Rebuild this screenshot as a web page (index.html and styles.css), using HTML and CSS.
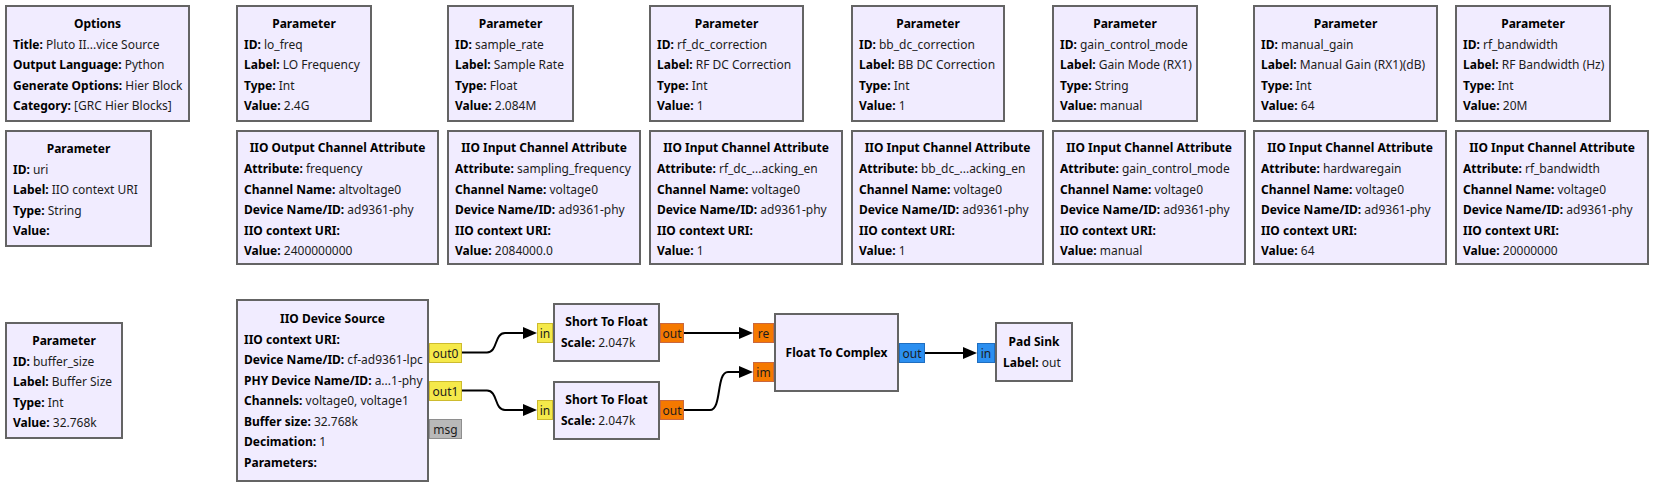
FILE: index.html
```html
<!DOCTYPE html>
<html lang="en">
<head>
    <meta charset="UTF-8">
    <meta name="viewport" content="width=device-width, initial-scale=1.0">
    <title>Pluto IIO Device Source - flowgraph</title>
    <link rel="stylesheet" href="styles.css">
</head>
<body>
    <div class="canvas">
        <!-- wires go first so ports and blocks sit on top -->
        <svg class="wires" width="1655" height="489" viewBox="0 0 1655 489">
            <path class="wire" d="M462 352.5 H487 C498 352.5, 494 333, 505 333 H524"/>
            <path class="arrow" d="M523 327 L537 333 L523 339 Z"/>
            <path class="wire" d="M462 390.5 H487 C498 390.5, 494 410, 505 410 H524"/>
            <path class="arrow" d="M523 404 L537 410 L523 416 Z"/>
            <path class="wire" d="M684 333 H740"/>
            <path class="arrow" d="M739 327 L753 333 L739 339 Z"/>
            <path class="wire" d="M684 410 H710 C722 410, 716 372, 728 372 H740"/>
            <path class="arrow" d="M739 366 L753 372 L739 378 Z"/>
            <path class="wire" d="M925 353 H964"/>
            <path class="arrow" d="M963 347 L977 353 L963 359 Z"/>
        </svg>

        <div class="block" id="options">
            <div class="title">Options</div>
            <div class="row"><b>Title:</b> Pluto II...vice Source</div>
            <div class="row"><b>Output Language:</b> Python</div>
            <div class="row"><b>Generate Options:</b> Hier Block</div>
            <div class="row"><b>Category:</b> [GRC Hier Blocks]</div>
        </div>

        <div class="block" id="p-lo-freq">
            <div class="title">Parameter</div>
            <div class="row"><b>ID:</b> lo_freq</div>
            <div class="row"><b>Label:</b> LO Frequency</div>
            <div class="row"><b>Type:</b> Int</div>
            <div class="row"><b>Value:</b> 2.4G</div>
        </div>

        <div class="block" id="p-sample-rate">
            <div class="title">Parameter</div>
            <div class="row"><b>ID:</b> sample_rate</div>
            <div class="row"><b>Label:</b> Sample Rate</div>
            <div class="row"><b>Type:</b> Float</div>
            <div class="row"><b>Value:</b> 2.084M</div>
        </div>

        <div class="block" id="p-rf-dc">
            <div class="title">Parameter</div>
            <div class="row"><b>ID:</b> rf_dc_correction</div>
            <div class="row"><b>Label:</b> RF DC Correction</div>
            <div class="row"><b>Type:</b> Int</div>
            <div class="row"><b>Value:</b> 1</div>
        </div>

        <div class="block" id="p-bb-dc">
            <div class="title">Parameter</div>
            <div class="row"><b>ID:</b> bb_dc_correction</div>
            <div class="row"><b>Label:</b> BB DC Correction</div>
            <div class="row"><b>Type:</b> Int</div>
            <div class="row"><b>Value:</b> 1</div>
        </div>

        <div class="block" id="p-gain-mode">
            <div class="title">Parameter</div>
            <div class="row"><b>ID:</b> gain_control_mode</div>
            <div class="row"><b>Label:</b> Gain Mode (RX1)</div>
            <div class="row"><b>Type:</b> String</div>
            <div class="row"><b>Value:</b> manual</div>
        </div>

        <div class="block" id="p-manual-gain">
            <div class="title">Parameter</div>
            <div class="row"><b>ID:</b> manual_gain</div>
            <div class="row"><b>Label:</b> Manual Gain (RX1)(dB)</div>
            <div class="row"><b>Type:</b> Int</div>
            <div class="row"><b>Value:</b> 64</div>
        </div>

        <div class="block" id="p-rf-bw">
            <div class="title">Parameter</div>
            <div class="row"><b>ID:</b> rf_bandwidth</div>
            <div class="row"><b>Label:</b> RF Bandwidth (Hz)</div>
            <div class="row"><b>Type:</b> Int</div>
            <div class="row"><b>Value:</b> 20M</div>
        </div>

        <div class="block" id="p-uri">
            <div class="title">Parameter</div>
            <div class="row"><b>ID:</b> uri</div>
            <div class="row"><b>Label:</b> IIO context URI</div>
            <div class="row"><b>Type:</b> String</div>
            <div class="row"><b>Value:</b></div>
        </div>

        <div class="block attr" id="a-lo-freq">
            <div class="title">IIO Output Channel Attribute</div>
            <div class="row"><b>Attribute:</b> frequency</div>
            <div class="row"><b>Channel Name:</b> altvoltage0</div>
            <div class="row"><b>Device Name/ID:</b> ad9361-phy</div>
            <div class="row"><b>IIO context URI:</b></div>
            <div class="row"><b>Value:</b> 2400000000</div>
        </div>

        <div class="block attr" id="a-sample-rate">
            <div class="title">IIO Input Channel Attribute</div>
            <div class="row"><b>Attribute:</b> sampling_frequency</div>
            <div class="row"><b>Channel Name:</b> voltage0</div>
            <div class="row"><b>Device Name/ID:</b> ad9361-phy</div>
            <div class="row"><b>IIO context URI:</b></div>
            <div class="row"><b>Value:</b> 2084000.0</div>
        </div>

        <div class="block attr" id="a-rf-dc">
            <div class="title">IIO Input Channel Attribute</div>
            <div class="row"><b>Attribute:</b> rf_dc_...acking_en</div>
            <div class="row"><b>Channel Name:</b> voltage0</div>
            <div class="row"><b>Device Name/ID:</b> ad9361-phy</div>
            <div class="row"><b>IIO context URI:</b></div>
            <div class="row"><b>Value:</b> 1</div>
        </div>

        <div class="block attr" id="a-bb-dc">
            <div class="title">IIO Input Channel Attribute</div>
            <div class="row"><b>Attribute:</b> bb_dc_...acking_en</div>
            <div class="row"><b>Channel Name:</b> voltage0</div>
            <div class="row"><b>Device Name/ID:</b> ad9361-phy</div>
            <div class="row"><b>IIO context URI:</b></div>
            <div class="row"><b>Value:</b> 1</div>
        </div>

        <div class="block attr" id="a-gain-mode">
            <div class="title">IIO Input Channel Attribute</div>
            <div class="row"><b>Attribute:</b> gain_control_mode</div>
            <div class="row"><b>Channel Name:</b> voltage0</div>
            <div class="row"><b>Device Name/ID:</b> ad9361-phy</div>
            <div class="row"><b>IIO context URI:</b></div>
            <div class="row"><b>Value:</b> manual</div>
        </div>

        <div class="block attr" id="a-manual-gain">
            <div class="title">IIO Input Channel Attribute</div>
            <div class="row"><b>Attribute:</b> hardwaregain</div>
            <div class="row"><b>Channel Name:</b> voltage0</div>
            <div class="row"><b>Device Name/ID:</b> ad9361-phy</div>
            <div class="row"><b>IIO context URI:</b></div>
            <div class="row"><b>Value:</b> 64</div>
        </div>

        <div class="block attr" id="a-rf-bw">
            <div class="title">IIO Input Channel Attribute</div>
            <div class="row"><b>Attribute:</b> rf_bandwidth</div>
            <div class="row"><b>Channel Name:</b> voltage0</div>
            <div class="row"><b>Device Name/ID:</b> ad9361-phy</div>
            <div class="row"><b>IIO context URI:</b></div>
            <div class="row"><b>Value:</b> 20000000</div>
        </div>

        <div class="block" id="p-buffer">
            <div class="title">Parameter</div>
            <div class="row"><b>ID:</b> buffer_size</div>
            <div class="row"><b>Label:</b> Buffer Size</div>
            <div class="row"><b>Type:</b> Int</div>
            <div class="row"><b>Value:</b> 32.768k</div>
        </div>

        <div class="block" id="dev-source">
            <div class="title">IIO Device Source</div>
            <div class="row"><b>IIO context URI:</b></div>
            <div class="row"><b>Device Name/ID:</b> cf-ad9361-lpc</div>
            <div class="row"><b>PHY Device Name/ID:</b> a...1-phy</div>
            <div class="row"><b>Channels:</b> voltage0, voltage1</div>
            <div class="row"><b>Buffer size:</b> 32.768k</div>
            <div class="row"><b>Decimation:</b> 1</div>
            <div class="row"><b>Parameters:</b></div>
        </div>

        <div class="block" id="stf-1">
            <div class="title">Short To Float</div>
            <div class="row"><b>Scale:</b> 2.047k</div>
        </div>

        <div class="block" id="stf-2">
            <div class="title">Short To Float</div>
            <div class="row"><b>Scale:</b> 2.047k</div>
        </div>

        <div class="block" id="ftc">
            <div class="title">Float To Complex</div>
        </div>

        <div class="block" id="pad-sink">
            <div class="title">Pad Sink</div>
            <div class="row"><b>Label:</b> out</div>
        </div>

        <!-- ports -->
        <div class="port short" id="dev-out0">out0</div>
        <div class="port short" id="dev-out1">out1</div>
        <div class="port message" id="dev-msg">msg</div>
        <div class="port short" id="stf1-in">in</div>
        <div class="port float" id="stf1-out">out</div>
        <div class="port short" id="stf2-in">in</div>
        <div class="port float" id="stf2-out">out</div>
        <div class="port float" id="ftc-re">re</div>
        <div class="port float" id="ftc-im">im</div>
        <div class="port complex" id="ftc-out">out</div>
        <div class="port complex" id="pad-in">in</div>
    </div>
</body>
</html>
```

FILE: styles.css
```css
body {
    font-family: "Noto Sans", "Open Sans", sans-serif;
    margin: 0;
    background: #ffffff;
    overflow: hidden;
}

.canvas {
    position: relative;
    width: 1655px;
    height: 489px;
}

.wires {
    position: absolute;
    left: 0;
    top: 0;
}

.wire {
    fill: none;
    stroke: #000000;
    stroke-width: 2;
}

.arrow {
    fill: #000000;
}

/* blocks */

.block {
    position: absolute;
    box-sizing: border-box;
    display: flex;
    flex-direction: column;
    justify-content: center;
    padding: 2px 6px 0;
    height: 117px;
    background: #f1ecff;
    border: 2px solid #646464;
    font-size: 12px;
    color: #1c1c1c;
    white-space: nowrap;
}

.block .title {
    font-weight: bold;
    text-align: center;
    line-height: 22px;
    color: #000000;
}

.block .row {
    line-height: 20.5px;
}

.block .row b {
    color: #000000;
}

.block.attr {
    height: 135px;
    padding-top: 4px;
}

#options { left: 5px; top: 5px; width: 185px; }
#p-lo-freq { left: 236px; top: 5px; width: 136px; }
#p-sample-rate { left: 447px; top: 5px; width: 127px; }
#p-rf-dc { left: 649px; top: 5px; width: 155px; }
#p-bb-dc { left: 851px; top: 5px; width: 154px; }
#p-gain-mode { left: 1052px; top: 5px; width: 146px; }
#p-manual-gain { left: 1253px; top: 5px; width: 185px; }
#p-rf-bw { left: 1455px; top: 5px; width: 156px; }

#p-uri { left: 5px; top: 130px; width: 147px; }
#a-lo-freq { left: 236px; top: 130px; width: 203px; }
#a-sample-rate { left: 447px; top: 130px; width: 194px; }
#a-rf-dc { left: 649px; top: 130px; width: 194px; }
#a-bb-dc { left: 851px; top: 130px; width: 193px; }
#a-gain-mode { left: 1052px; top: 130px; width: 194px; }
#a-manual-gain { left: 1253px; top: 130px; width: 194px; }
#a-rf-bw { left: 1455px; top: 130px; width: 194px; }

#p-buffer { left: 5px; top: 322px; width: 118px; }
#dev-source { left: 236px; top: 299px; width: 193px; height: 183px; padding-top: 0; }
#stf-1 { left: 553px; top: 303px; width: 107px; height: 59px; padding-top: 0; }
#stf-2 { left: 553px; top: 381px; width: 107px; height: 59px; padding-top: 0; }
#ftc { left: 774px; top: 313px; width: 125px; height: 79px; padding-top: 0; }
#pad-sink { left: 995px; top: 322px; width: 78px; height: 60px; padding-top: 1px; }

/* ports */

.port {
    position: absolute;
    box-sizing: border-box;
    height: 20px;
    line-height: 19px;
    font-size: 12px;
    text-align: center;
    color: #1c1c1c;
    border: 1px solid;
}

.port.short {
    background: #f5e94a;
    border-color: #cdbb2e;
}

.port.float {
    background: #f57900;
    border-color: #c9683f;
}

.port.complex {
    background: #2b8ff0;
    border-color: #1f6ec0;
}

.port.message {
    background: #b9b9b9;
    border-color: #8e8e8e;
}

#dev-out0 { left: 429px; top: 343px; width: 33px; }
#dev-out1 { left: 429px; top: 381px; width: 33px; }
#dev-msg { left: 429px; top: 419px; width: 33px; }
#stf1-in { left: 537px; top: 323px; width: 16px; }
#stf1-out { left: 660px; top: 323px; width: 24px; }
#stf2-in { left: 537px; top: 400px; width: 16px; }
#stf2-out { left: 660px; top: 400px; width: 24px; }
#ftc-re { left: 753px; top: 323px; width: 21px; }
#ftc-im { left: 753px; top: 362px; width: 21px; }
#ftc-out { left: 899px; top: 343px; width: 26px; }
#pad-in { left: 977px; top: 343px; width: 18px; }
```
